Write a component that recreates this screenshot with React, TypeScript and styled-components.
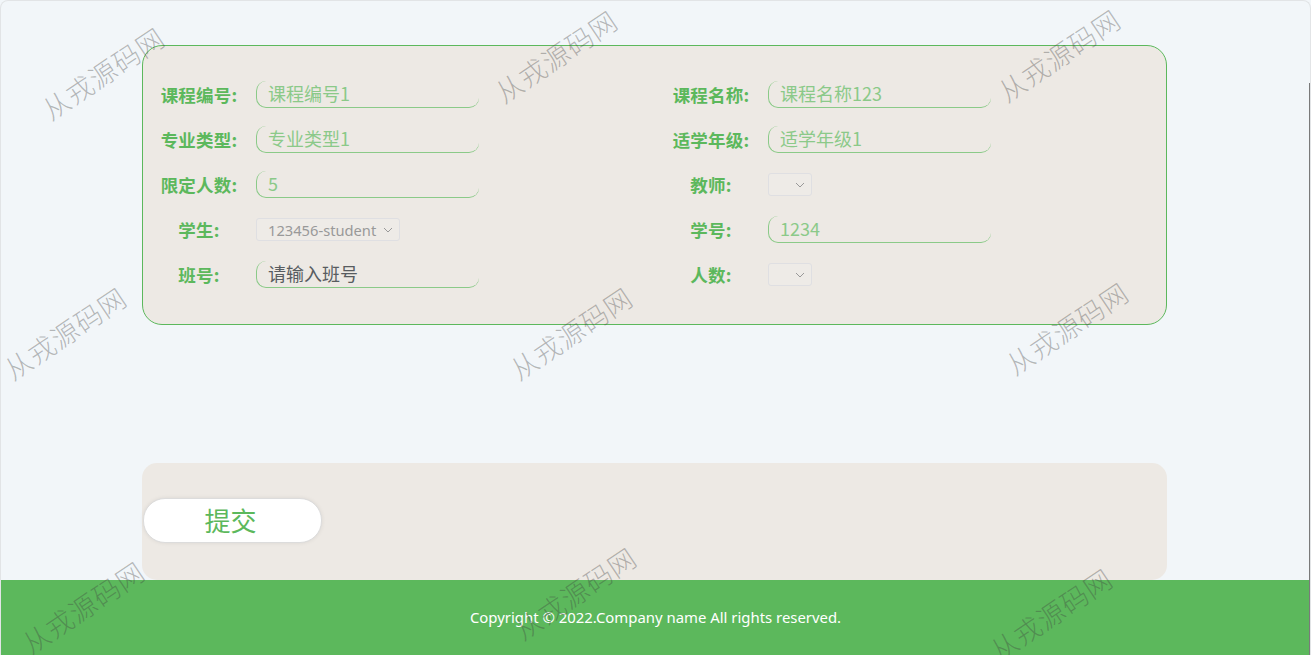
import React from "react";
import styled, { createGlobalStyle } from "styled-components";

const GlobalStyle = createGlobalStyle`
  html, body {
    margin: 0;
    padding: 0;
    height: 655px;
    overflow: hidden;
    background: #f2f6f9;
  }
  * { box-sizing: border-box; }
  #root { height: 655px; }
`;

const GREEN = "#5cb85c";

const Page = styled.div`
  position: relative;
  height: 655px;
  background: #f2f6f9;
  border: 1px solid #e2e4e6;
  border-bottom: none;
  border-radius: 8px 8px 0 0;
  display: flex;
  flex-direction: column;
  font-family: "Noto Sans CJK SC", "Noto Sans", sans-serif;
  overflow: hidden;
  &::after {
    content: "";
    position: absolute;
    right: 0;
    top: 82px;
    bottom: 0;
    width: 1px;
    background: #7a7a7a;
  }
`;

const Main = styled.main`
  flex: 1;
  display: flex;
  flex-direction: column;
  padding: 44px 0 0 141px;
`;

const FormCard = styled.section`
  width: 1025px;
  height: 280px;
  border: 1px solid ${GREEN};
  border-radius: 20px;
  background: #ede9e4;
  padding: 26px 0;
  display: grid;
  grid-template-columns: 512px 512px;
  grid-auto-rows: 45px;
`;

const Field = styled.div`
  display: flex;
  align-items: center;
`;

const Label = styled.label`
  width: 112px;
  text-align: center;
  font-size: 17.5px;
  font-weight: 700;
  color: ${GREEN};
  letter-spacing: 0.2px;
`;

const TextInput = styled.input<{ $dark?: boolean }>`
  width: 223px;
  height: 27px;
  margin-top: -1px;
  margin-left: 1px;
  border: 1px solid #8bca88;
  border-top: none;
  border-right: none;
  border-radius: 10px;
  background: transparent;
  padding: 0 0 1px 11px;
  font-family: "Noto Sans CJK SC", "Noto Sans", sans-serif;
  font-size: 18px;
  color: ${(p) => (p.$dark ? "#555" : "#8bc989")};
  outline: none;
  &::placeholder {
    color: #585c60;
  }
`;

const SelectBox = styled.div<{ $w: number }>`
  width: ${(p) => p.$w}px;
  height: 23px;
  margin-left: 1px;
  border: 1px solid #dfdfe2;
  border-radius: 3px;
  background: #eeebe7;
  display: flex;
  align-items: center;
  justify-content: space-between;
  padding: 0 6px 0 11px;
  font-family: "Noto Sans", sans-serif;
  font-size: 14.7px;
  color: #999;
`;

const Chevron = () => (
  <svg width="10" height="6" viewBox="0 0 10 6" fill="none">
    <path d="M1 1l4 4 4-4" stroke="#999" strokeWidth="1" />
  </svg>
);

const Gap = styled.div`
  height: 138px;
  flex: none;
`;

const ActionCard = styled.section`
  width: 1025px;
  height: 117px;
  border-radius: 15px;
  background: #ede9e4;
  padding-top: 35px;
  padding-left: 1px;
`;

const SubmitButton = styled.button`
  width: 179px;
  height: 45px;
  border: 1px solid #dcdcdc;
  border-radius: 22px;
  background: #fff;
  box-shadow: 0 0 4px rgba(0, 0, 0, 0.08);
  color: ${GREEN};
  font-family: "Noto Sans CJK SC", sans-serif;
  font-size: 26px;
  padding: 0 4px 2px 0;
  cursor: pointer;
`;

const Footer = styled.footer`
  height: 75px;
  flex: none;
  background: ${GREEN};
  color: #fff;
  display: flex;
  align-items: center;
  justify-content: center;
  font-family: "Noto Sans", sans-serif;
  font-size: 14.9px;
  padding-bottom: 2px;
`;

const WatermarkLayer = styled.div`
  position: absolute;
  inset: 0;
  pointer-events: none;
`;

const Watermark = styled.span`
  position: absolute;
  width: 160px;
  height: 34px;
  margin-left: -80px;
  margin-top: -17px;
  text-align: center;
  line-height: 34px;
  font-family: "Noto Sans CJK SC", sans-serif;
  font-weight: 300;
  font-size: 27px;
  letter-spacing: 1px;
  color: rgba(60, 60, 60, 0.35);
  transform: rotate(-34deg);
  white-space: nowrap;
`;

type F =
  | { label: string; kind: "input"; value?: string; placeholder?: string }
  | { label: string; kind: "select"; value: string; width: number };

const fields: F[] = [
  { label: "课程编号:", kind: "input", value: "课程编号1" },
  { label: "课程名称:", kind: "input", value: "课程名称123" },
  { label: "专业类型:", kind: "input", value: "专业类型1" },
  { label: "适学年级:", kind: "input", value: "适学年级1" },
  { label: "限定人数:", kind: "input", value: "5" },
  { label: "教师:", kind: "select", value: "", width: 44 },
  { label: "学生:", kind: "select", value: "123456-student", width: 144 },
  { label: "学号:", kind: "input", value: "1234" },
  { label: "班号:", kind: "input", placeholder: "请输入班号" },
  { label: "人数:", kind: "select", value: "", width: 44 },
];

const marks: [number, number][] = [
  [102, 72],
  [555, 55],
  [1058, 54],
  [64, 332],
  [570, 332],
  [1066, 327],
  [82, 606],
  [574, 592],
  [1050, 613],
];

export default function App() {
  return (
    <>
      <GlobalStyle />
      <Page>
        <Main>
          <FormCard>
            {fields.map((f, i) => (
              <Field key={i}>
                <Label>{f.label}</Label>
                {f.kind === "input" ? (
                  f.placeholder ? (
                    <TextInput $dark placeholder={f.placeholder} />
                  ) : (
                    <TextInput readOnly defaultValue={f.value} />
                  )
                ) : (
                  <SelectBox $w={f.width}>
                    <span>{f.value}</span>
                    <Chevron />
                  </SelectBox>
                )}
              </Field>
            ))}
          </FormCard>
          <Gap />
          <ActionCard>
            <SubmitButton>提交</SubmitButton>
          </ActionCard>
        </Main>
        <Footer>Copyright © 2022.Company name All rights reserved.</Footer>
        <WatermarkLayer>
          {marks.map(([x, y], i) => (
            <Watermark key={i} style={{ left: x, top: y }}>
              从戎源码网
            </Watermark>
          ))}
        </WatermarkLayer>
      </Page>
    </>
  );
}
